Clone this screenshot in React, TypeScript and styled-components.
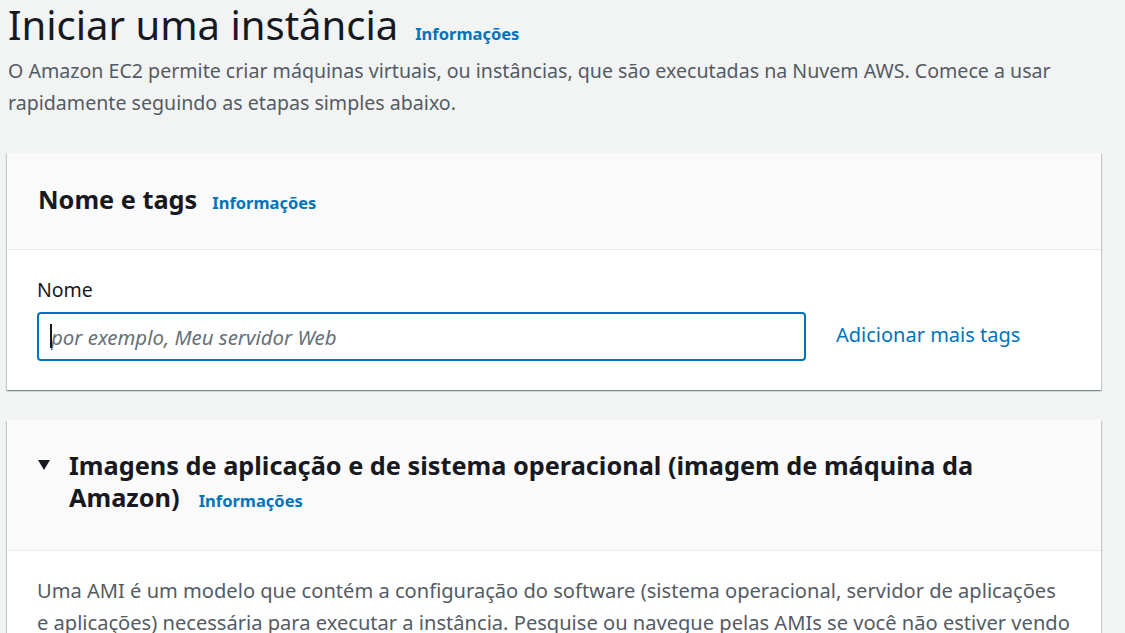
import styled, { createGlobalStyle } from "styled-components";

const GlobalStyle = createGlobalStyle`
    html, body {
        margin: 0;
        padding: 0;
        background-color: #f2f3f3;
        font-family: "Noto Sans", "Open Sans", sans-serif;
        color: #16191f;
    }
`;

const Page = styled.div`
    padding: 0 24px 0 7px;
    display: flex;
    flex-direction: column;
`;

const PageHeader = styled.header`
    padding-bottom: 34px;
`;

const TitleRow = styled.div`
    display: flex;
    align-items: baseline;
    gap: 17px;
    padding-left: 1px;
`;

const Title = styled.h1`
    margin: 0;
    font-size: 40px;
    font-weight: 400;
    line-height: 50px;
    color: #16191f;
`;

const InfoLink = styled.a`
    font-size: 16.5px;
    font-weight: 700;
    color: #0073bb;
    text-decoration: none;
    white-space: nowrap;
`;

const Description = styled.p`
    margin: 5px 0 0;
    padding-left: 1px;
    font-size: 19.6px;
    line-height: 32px;
    color: #545b64;
`;

const Card = styled.section`
    background-color: #fff;
    box-shadow: 0 1px 1px 0 rgba(0, 28, 36, 0.3), 1px 1px 1px 0 rgba(0, 28, 36, 0.15),
        -1px 1px 1px 0 rgba(0, 28, 36, 0.15);
    margin-bottom: 30px;
`;

const CardHeader = styled.div<{ $padTop: number; $padBottom: number }>`
    background-color: #fafafa;
    border-bottom: 1px solid #eaeded;
    padding: ${(p) => p.$padTop}px 30px ${(p) => p.$padBottom}px 31px;
    display: flex;
    align-items: flex-start;
    gap: 19px;
`;

const CardTitle = styled.h2<{ $linkGap?: number }>`
    margin: 0;
    font-size: 25.3px;
    font-weight: 700;
    line-height: 32px;
    color: #16191f;

    a {
        margin-left: ${(p) => p.$linkGap ?? 15}px;
    }
`;

const Caret = styled.span`
    width: 0;
    height: 0;
    margin-top: 11px;
    border-left: 6px solid transparent;
    border-right: 6px solid transparent;
    border-top: 10px solid #16191f;
    flex-shrink: 0;
`;

const CardBody = styled.div<{ $padTop: number; $padBottom: number }>`
    padding: ${(p) => p.$padTop}px 30px ${(p) => p.$padBottom}px 30px;
`;

const Label = styled.label`
    display: block;
    font-size: 19.5px;
    line-height: 26px;
    color: #16191f;
    margin-bottom: 9px;
`;

const FieldRow = styled.div`
    display: flex;
    align-items: center;
    gap: 30px;
`;

const InputWrap = styled.div`
    position: relative;
    width: 769px;
    flex-shrink: 0;

    &::before {
        content: "";
        position: absolute;
        left: 13px;
        top: 12px;
        width: 2px;
        height: 24px;
        background-color: #16191f;
    }
`;

const TextInput = styled.input`
    box-sizing: border-box;
    width: 100%;
    height: 49px;
    padding: 0 12px 0 12px;
    border: 2px solid #0073bb;
    border-radius: 4px;
    outline: none;
    font-family: "Noto Sans", "Open Sans", sans-serif;
    font-size: 20.4px;
    color: #16191f;
    background-color: #fff;

    &::placeholder {
        font-style: italic;
        color: #687078;
    }
`;

const LinkText = styled.a`
    font-size: 20px;
    color: #0073bb;
    text-decoration: none;
    padding-bottom: 4px;
`;

const BodyText = styled.p`
    margin: 0;
    font-size: 20.1px;
    line-height: 32px;
    color: #545b64;
`;

export default function App() {
    return (
        <>
            <GlobalStyle />
            <Page>
                <PageHeader>
                    <TitleRow>
                        <Title>Iniciar uma instância</Title>
                        <InfoLink>Informações</InfoLink>
                    </TitleRow>
                    <Description>
                        O Amazon EC2 permite criar máquinas virtuais, ou instâncias, que são executadas na Nuvem AWS.
                        Comece a usar rapidamente seguindo as etapas simples abaixo.
                    </Description>
                </PageHeader>

                <Card>
                    <CardHeader $padTop={30} $padBottom={30}>
                        <CardTitle>
                            Nome e tags
                            <InfoLink>Informações</InfoLink>
                        </CardTitle>
                    </CardHeader>
                    <CardBody $padTop={27} $padBottom={29}>
                        <Label>Nome</Label>
                        <FieldRow>
                            <InputWrap>
                                <TextInput placeholder="por exemplo, Meu servidor Web" />
                            </InputWrap>
                            <LinkText>Adicionar mais tags</LinkText>
                        </FieldRow>
                    </CardBody>
                </Card>

                <Card>
                    <CardHeader $padTop={29} $padBottom={33}>
                        <Caret />
                        <CardTitle $linkGap={19}>
                            Imagens de aplicação e de sistema operacional (imagem de máquina da Amazon)
                            <InfoLink>Informações</InfoLink>
                        </CardTitle>
                    </CardHeader>
                    <CardBody $padTop={24} $padBottom={30}>
                        <BodyText>
                            Uma AMI é um modelo que contém a configuração do software (sistema operacional, servidor de
                            aplicações e aplicações) necessária para executar a instância. Pesquise ou navegue pelas AMIs
                            se você não estiver vendo o que procura abaixo.
                        </BodyText>
                    </CardBody>
                </Card>
            </Page>
        </>
    );
}
